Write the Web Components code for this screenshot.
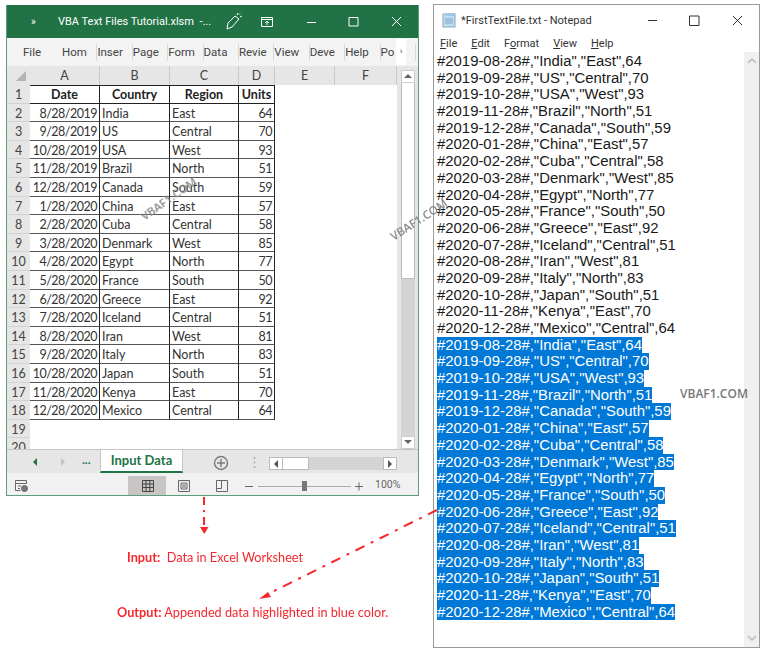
<!DOCTYPE html>
<html>
<head>
<meta charset="utf-8">
<title>VBA Text Files</title>
<style>
  html, body { margin: 0; padding: 0; background: #fff; }
  body { width: 768px; height: 658px; overflow: hidden; position: relative; font-family: Roboto, "Liberation Sans", sans-serif; }
</style>
</head>
<body>
<demo-canvas>
  <excel-window slot="excel"></excel-window>
  <notepad-window slot="notepad"></notepad-window>
</demo-canvas>

<script>
// shared data, same rows go in the sheet and in the text file
const ROWS = [
  ['8/28/2019', 'India', 'East', 64, '2019-08-28'],
  ['9/28/2019', 'US', 'Central', 70, '2019-09-28'],
  ['10/28/2019', 'USA', 'West', 93, '2019-10-28'],
  ['11/28/2019', 'Brazil', 'North', 51, '2019-11-28'],
  ['12/28/2019', 'Canada', 'South', 59, '2019-12-28'],
  ['1/28/2020', 'China', 'East', 57, '2020-01-28'],
  ['2/28/2020', 'Cuba', 'Central', 58, '2020-02-28'],
  ['3/28/2020', 'Denmark', 'West', 85, '2020-03-28'],
  ['4/28/2020', 'Egypt', 'North', 77, '2020-04-28'],
  ['5/28/2020', 'France', 'South', 50, '2020-05-28'],
  ['6/28/2020', 'Greece', 'East', 92, '2020-06-28'],
  ['7/28/2020', 'Iceland', 'Central', 51, '2020-07-28'],
  ['8/28/2020', 'Iran', 'West', 81, '2020-08-28'],
  ['9/28/2020', 'Italy', 'North', 83, '2020-09-28'],
  ['10/28/2020', 'Japan', 'South', 51, '2020-10-28'],
  ['11/28/2020', 'Kenya', 'East', 70, '2020-11-28'],
  ['12/28/2020', 'Mexico', 'Central', 64, '2020-12-28']
];

class DemoCanvas extends HTMLElement {
  constructor() {
    super();
    this.attachShadow({ mode: 'open' });
    this.shadowRoot.innerHTML = `
      <style>
        :host { display: block; width: 768px; height: 658px; position: relative; filter: blur(.4px); }
        .excel { position: absolute; left: 6px; top: 5px; }
        .notepad { position: absolute; left: 433px; top: 4px; }
        .mark { position: absolute; color: #8a8a8a; font: 600 11.5px "Open Sans", sans-serif; white-space: nowrap; }
        .m1 { left: 136px; top: 191px; transform: rotate(-35deg); }
        .m2 { left: 386px; top: 212px; transform: rotate(-33deg); }
        .m3 { left: 680px; top: 385px; font-size: 12px; color: #777; }
        .note { position: absolute; color: #f5282d; font: 12.700px Lato, sans-serif; white-space: nowrap; }
        .note b { font-weight: 700; }
        svg { position: absolute; left: 0; top: 0; }
      </style>
      <div class="excel"><slot name="excel"></slot></div>
      <div class="notepad"><slot name="notepad"></slot></div>
      <span class="mark m1">VBAF1.COM</span>
      <span class="mark m2">VBAF1.COM</span>
      <span class="mark m3">VBAF1.COM</span>
      <svg width="768" height="658" fill="none">
        <path d="M204 497V526" stroke="#f5282d" stroke-width="2" stroke-dasharray="8 5 2 5"/>
        <path d="M200 527h8.500l-4.200 7z" fill="#f5282d"/>
        <path d="M437 510L272 592" stroke="#f5282d" stroke-width="2" stroke-dasharray="10 7 3 7"/>
        <path d="M259 599l9-7 3 5z" fill="#f5282d"/>
      </svg>
      <span class="note" style="left:127px;top:549px"><b>Input:</b>&nbsp; Data in Excel Worksheet</span>
      <span class="note" style="left:117px;top:604px"><b>Output:</b> Appended data highlighted in blue color.</span>
    `;
  }
}

class ExcelWindow extends HTMLElement {
  constructor() {
    super();
    this.attachShadow({ mode: 'open' });
    const tabs = ['Hom', 'Inser', 'Page', 'Form', 'Data', 'Revie', 'View', 'Deve', 'Help', 'Po'];
    const cols = ['A', 'B', 'C', 'D', 'E', 'F'];
    let cells = `<div class="rh corner"><svg width="12" height="12"><path d="M11 1V11H1z" fill="#b4b4b4"/></svg></div>`;
    cells += cols.map(c => `<div class="ch">${c}</div>`).join('');
    cells += `<div class="rh">1</div><div class="c b h">Date</div><div class="c b h">Country</div><div class="c b h">Region</div><div class="c b h">Units</div><div class="c e"></div><div class="c e"></div>`;
    ROWS.forEach((r, i) => {
      cells += `<div class="rh">${i + 2}</div><div class="c b r">${r[0]}</div><div class="c b">${r[1]}</div><div class="c b">${r[2]}</div><div class="c b r">${r[3]}</div><div class="c e"></div><div class="c e"></div>`;
    });
    cells += `<div class="rh">19</div><div class="c e"></div><div class="c e"></div><div class="c e"></div><div class="c e"></div><div class="c e"></div><div class="c e"></div>`;
    cells += `<div class="rh">20</div><div class="c e"></div><div class="c e"></div><div class="c e"></div><div class="c e"></div><div class="c e"></div><div class="c e"></div>`;
    this.shadowRoot.innerHTML = `
      <style>
        :host { display: flex; flex-direction: column; width: 413px; height: 491px; box-sizing: border-box; border: 1px solid #5f9c7c; border-top: 0; background: #e6e6e6; font-family: Roboto, sans-serif; color: #333; overflow: hidden; }
        .title { height: 33px; flex: none; background: #217346; color: #fff; display: flex; align-items: center; font-size: 11px; }
        .title .more { margin-left: 24px; width: 27px; font-size: 10px; }
        .title .name { width: 160px; white-space: nowrap; }
        .title svg { display: block; flex: none; }
        .ribbon { height: 28px; flex: none; background: #f3f3f3; display: flex; align-items: center; font-size: 11.500px; color: #444; position: relative; overflow: hidden; }
        .ribbon .file { margin-left: 16px; width: 39px; flex: none; }
        .ribbon .tab { width: 35.400px; flex: none; box-sizing: border-box; border-right: 1px solid #d8d8d8; white-space: nowrap; height: 17px; line-height: 17px; overflow: hidden; }
        .ribbon .tab:last-of-type { border: 0; }
        .ribbon .next { position: absolute; right: 12px; top: 1px; width: 10px; height: 26px; background: #fff; font-size: 9px; line-height: 25px; text-align: center; }
        .body { flex: none; height: 383px; display: flex; background: #e6e6e6; }
        .grid { width: 390px; height: 383px; display: grid; grid-template-columns: 23px 70px 70px 69px 36px 60px 62px; grid-template-rows: 19px repeat(20, 18.6px); overflow: hidden; font: 12.500px/20px Lato, sans-serif; flex: none; }
        .ch { background: #e6e6e6; text-align: center; border-right: 1px solid #c8c8c8; color: #444; box-sizing: border-box; }
        .rh { background: #e6e6e6; text-align: center; color: #444; border-bottom: 1px solid #d2d2d2; box-sizing: border-box; }
        .corner { display: flex; justify-content: flex-end; align-items: flex-end; padding: 0 3px 3px 0; border: 0; }
        .c { background: #fff; padding: 0 2px; overflow: hidden; white-space: nowrap; box-sizing: border-box; color: #333; }
        .c.b { border-right: 1px solid #222; border-bottom: 1px solid #555; }
        .c.h { font-weight: 700; text-align: center; padding: 0; color: #222; border-top: 1px solid #222; border-bottom-color: #222; line-height: 18px; }
        .c.r { text-align: right; letter-spacing: -.5px; }
        .vbar { width: 14px; margin: 4px 0 0 4px; display: flex; flex-direction: column; background: #d4d4d4; height: 379px; flex: none; }
        .btn { height: 13px; flex: none; background: #fff; border: 1px solid #ccc; box-sizing: border-box; display: flex; align-items: center; justify-content: center; }
        .thumb { height: 196px; flex: none; background: #fff; border: 1px solid #bbb; border-top: 0; box-sizing: border-box; }
        .fill { flex: 1; }
        .tabs { height: 24px; flex: none; background: #e6e6e6; display: flex; align-items: center; position: relative; border-top: 1px solid #c6c6c6; box-sizing: border-box; font: 700 13px Lato, sans-serif; }
        .sheet { position: absolute; left: 93px; top: -1px; width: 83px; height: 24px; box-sizing: border-box; background: #fff; color: #217346; text-align: center; line-height: 21px; border: 1px solid #c6c6c6; border-bottom: 2px solid #217346; }
        .tabs .arr { position: absolute; top: 7px; }
        .dots { position: absolute; left: 75px; top: 2px; color: #217346; font-size: 12px; }
        .hbar { position: absolute; left: 262px; top: 7px; width: 128px; height: 13px; background: #d4d4d4; display: flex; }
        .hb { width: 14px; height: 13px; background: #fff; border: 1px solid #bbb; box-sizing: border-box; display: flex; align-items: center; justify-content: center; }
        .status { height: 23px; flex: none; background: #f1f1f1; display: flex; align-items: center; position: relative; font-size: 10.500px; color: #666; }
        .status > * { position: absolute; }
      </style>
      <div class="title">
        <span class="more">»</span>
        <span class="name">VBA Text Files Tutorial.xlsm &nbsp;-...</span>
        <svg width="20" height="20" viewBox="0 0 20 20" fill="none" stroke="#fff" stroke-width="1" style="margin-left:6px"><path d="M3 17l1-6 7-7 4 3-7 8zM13 3l1-2M16 5l2-1M15 2.500l1-1"/></svg>
        <svg width="14" height="12" viewBox="0 0 14 12" fill="none" stroke="#fff" stroke-width="1" style="margin-left:16px"><path d="M1.500 1.500h11v9h-11zM1.500 3.500h11"/><path d="M7 9V5M5 7l2-2 2 2"/></svg>
        <svg width="12" height="10" style="margin-left:32px"><path d="M1 5.500h9" stroke="#fff"/></svg>
        <svg width="11" height="11" fill="none" style="margin-left:30px"><path d="M1 1.500h9v8.500h-9z" stroke="#fff"/></svg>
        <svg width="11" height="11" fill="none" style="margin-left:32px"><path d="M1 1l9 9M10 1l-9 9" stroke="#fff"/></svg>
      </div>
      <div class="ribbon">
        <span class="file">File</span>
        ${tabs.map(t => `<span class="tab">${t}</span>`).join('')}
        <span class="next">›</span>
      </div>
      <div class="body">
        <div class="grid">${cells}</div>
        <div class="vbar">
          <div class="btn"><svg width="8" height="5"><path d="M4 0l4 4H0z" fill="#666"/></svg></div>
          <div class="thumb"></div>
          <div class="fill"></div>
          <div class="btn"><svg width="8" height="5"><path d="M0 0h8L4 4z" fill="#666"/></svg></div>
        </div>
      </div>
      <div class="tabs">
        <svg class="arr" style="left:25px" width="7" height="10"><path d="M5 1v8L1 5z" fill="#217346"/></svg>
        <svg class="arr" style="left:52px" width="7" height="10"><path d="M2 1v8l4-4z" fill="#c4c4c4"/></svg>
        <span class="dots">...</span>
        <div class="sheet">Input Data</div>
        <svg style="position:absolute;left:206px;top:5px" width="16" height="16" fill="none" stroke="#7b7b7b" stroke-width="1.400"><circle cx="8" cy="8" r="6.500"/><path d="M8 4v8M4 8h8"/></svg>
        <svg style="position:absolute;left:246px;top:6px" width="3" height="14"><path d="M1.500 1v11" stroke="#aaa" stroke-width="1.500" stroke-dasharray="2 2.500"/></svg>
        <div class="hbar">
          <div class="hb"><svg width="6" height="8"><path d="M5 0v8L1 4z" fill="#555"/></svg></div>
          <div class="hb" style="width:26px;border-left:0"></div>
          <div style="flex:1"></div>
          <div class="hb"><svg width="6" height="8"><path d="M1 0v8l4-4z" fill="#555"/></svg></div>
        </div>
      </div>
      <div class="status">
        <svg style="left:7px;top:5px" width="15" height="15" fill="none" stroke="#666"><path d="M1.500 2.500h11v3h-11zM1.500 5.500v7h5M4 8h3M4 10.500h2"/><circle cx="10.500" cy="10.500" r="3" fill="#777"/></svg>
        <div style="left:121px;top:3px;width:38px;height:20px;background:#c8c6c4"></div>
        <svg style="left:134px;top:6px" width="14" height="14" fill="none" stroke="#444"><path d="M1.500 1.500h11v11h-11zM1.500 5h11M1.500 8.500h11M5 1.500v11M8.800 1.500v11"/></svg>
        <svg style="left:170px;top:6px" width="14" height="14" fill="none" stroke="#666"><path d="M1.500 1.500h11v11h-11zM4 4h6v6H4zM5 6h4M5 8h4"/></svg>
        <svg style="left:208px;top:6px" width="14" height="14" fill="none" stroke="#666"><path d="M1.500 1.500h11v11h-11zM1.500 9.500h5v-8"/></svg>
        <svg style="left:238px;top:6px" width="120" height="14" fill="none"><path d="M0 7.500h8" stroke="#666"/><path d="M13 7.500h93" stroke="#aaa"/><rect x="57" y="2" width="5" height="10" fill="#777"/><path d="M110 7.500h8M114 3.500v8" stroke="#666"/></svg>
        <span style="left:368px;top:5px">100%</span>
      </div>
    `;
  }
}

class NotepadWindow extends HTMLElement {
  constructor() {
    super();
    this.attachShadow({ mode: 'open' });
    const line = r => `#${r[4]}#,"${r[1]}","${r[2]}",${r[3]}`;
    const plain = ROWS.map(r => `<div class="l">${line(r)}</div>`).join('');
    const sel = ROWS.map(r => `<div class="l"><span class="s">${line(r)}</span></div>`).join('');
    this.shadowRoot.innerHTML = `
      <style>
        :host { display: flex; flex-direction: column; width: 327px; height: 644px; box-sizing: border-box; border: 1px solid #9a9a9a; background: #fff; font-family: Roboto, sans-serif; color: #333; overflow: hidden; }
        .title { height: 30px; flex: none; display: flex; align-items: center; font-size: 11px; }
        .title .ico { margin-left: 8px; margin-right: 3px; flex: none; }
        .title .name { width: 186px; white-space: nowrap; }
        .title svg { flex: none; }
        .menu { height: 17px; flex: none; display: flex; gap: 14px; padding-left: 6px; font-size: 11px; align-items: center; }
        .menu u { text-decoration-thickness: 1px; }
        .body { flex: 1; display: flex; min-height: 0; }
        .text { flex: 1; padding: 1px 0 0 3px; font: 14.900px/16.700px "Liberation Sans", sans-serif; color: #1a1a1a; overflow: hidden; }
        .l { height: 16.700px; white-space: nowrap; }
        .s { background: #0078d7; color: #fff; display: inline-block; height: 16.700px; }
        .sb { width: 15px; flex: none; background: #f0f0f0; display: flex; flex-direction: column; justify-content: space-between; align-items: center; padding: 6px 0; box-sizing: border-box; }
        .sb svg { display: block; }
      </style>
      <div class="title">
        <svg class="ico" width="16" height="16" viewBox="0 0 16 16"><rect x="1" y="2" width="12" height="13" fill="#bcdcf2" stroke="#8aa6bb"/><rect x="4" y="1" width="8" height="3" fill="#9cc8e8"/><path d="M3 7h8M3 9h8M3 11h8" stroke="#6f97b5" stroke-width=".7"/></svg>
        <span class="name">*FirstTextFile.txt - Notepad</span>
        <svg width="12" height="10"><path d="M1 5.500h9" stroke="#333"/></svg>
        <svg width="11" height="11" fill="none" style="margin-left:30px"><path d="M.5 1h9.500v9.500h-9.500z" stroke="#333"/></svg>
        <svg width="11" height="11" fill="none" style="margin-left:32px"><path d="M1 1l9 9M10 1l-9 9" stroke="#333"/></svg>
      </div>
      <div class="menu">
        <span><u>F</u>ile</span><span><u>E</u>dit</span><span>F<u>o</u>rmat</span><span><u>V</u>iew</span><span><u>H</u>elp</span>
      </div>
      <div class="body">
        <div class="text">${plain}${sel}</div>
        <div class="sb">
          <svg width="10" height="6" fill="none"><path d="M1 5l4-4 4 4" stroke="#bbb" stroke-width="1.500"/></svg>
          <svg width="10" height="6" fill="none"><path d="M1 1l4 4 4-4" stroke="#bbb" stroke-width="1.500"/></svg>
        </div>
      </div>
    `;
  }
}

customElements.define('demo-canvas', DemoCanvas);
customElements.define('excel-window', ExcelWindow);
customElements.define('notepad-window', NotepadWindow);
</script>
</body>
</html>
